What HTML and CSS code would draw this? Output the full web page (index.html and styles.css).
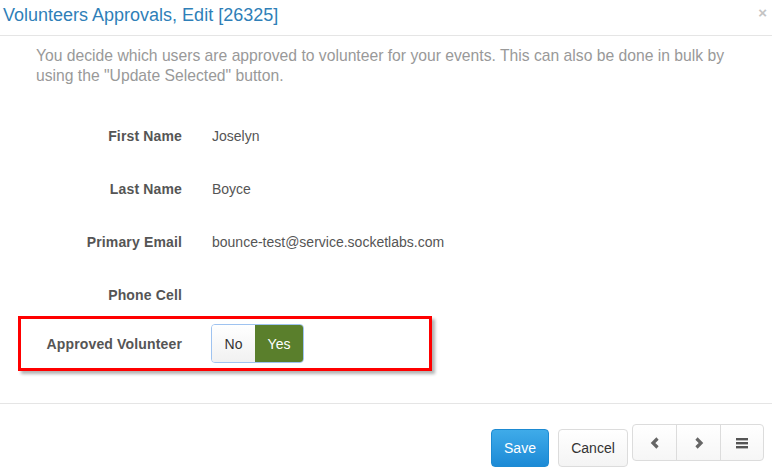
FILE: index.html
```html
<!DOCTYPE html>
<html>
<head>
<meta charset="utf-8">
<link rel="stylesheet" href="styles.css">
</head>
<body>
<div class="modal">
  <div class="modal-header">
    <h4 class="title">Volunteers Approvals, Edit [26325]</h4>
    <span class="close">×</span>
  </div>
  <div class="modal-body">
    <p class="desc">You decide which users are approved to volunteer for your events. This can also be done in bulk by using the "Update Selected" button.</p>
    <div class="form">
      <div class="row"><div class="label">First Name</div><div class="value">Joselyn</div></div>
      <div class="row"><div class="label">Last Name</div><div class="value">Boyce</div></div>
      <div class="row"><div class="label">Primary Email</div><div class="value">bounce-test@service.socketlabs.com</div></div>
      <div class="row row-last"><div class="label">Phone Cell</div><div class="value"></div></div>
      <div class="highlight">
        <div class="row row-toggle">
          <div class="label">Approved Volunteer</div>
          <div class="value">
            <div class="toggle"><span class="opt no">No</span><span class="opt yes">Yes</span></div>
          </div>
        </div>
      </div>
    </div>
  </div>
  <div class="modal-footer">
    <button class="btn btn-save">Save</button>
    <button class="btn btn-cancel">Cancel</button>
    <div class="btn-group">
      <span class="gbtn"><svg width="10" height="12" viewBox="0 0 10 12"><polyline points="7.5,1.5 3,6 7.5,10.5" fill="none" stroke="#666" stroke-width="3.2"/></svg></span>
      <span class="gbtn"><svg width="10" height="12" viewBox="0 0 10 12"><polyline points="2.5,1.5 7,6 2.5,10.5" fill="none" stroke="#666" stroke-width="3.2"/></svg></span>
      <span class="gbtn"><svg width="12" height="12" viewBox="0 0 12 12"><rect x="0" y="1" width="12" height="2.4" fill="#555"/><rect x="0" y="5" width="12" height="2.4" fill="#555"/><rect x="0" y="9" width="12" height="2.4" fill="#555"/></svg></span>
    </div>
  </div>
</div>
</body>
</html>
```

FILE: styles.css
```css
* { box-sizing: border-box; }
html, body { margin: 0; padding: 0; background: #fff; }
body { font-family: "Liberation Sans", Arial, sans-serif; font-size: 14px; color: #555; width: 772px; height: 476px; overflow: hidden; }

.modal-header {
  height: 36px;
  border-bottom: 1px solid #e5e5e5;
  display: flex;
  justify-content: space-between;
  align-items: flex-start;
}
.title {
  margin: 0;
  padding: 4px 0 0 3px;
  font-size: 18px;
  font-weight: normal;
  line-height: 22px;
  color: #2f7fb8;
}
.close {
  color: #c4c4c4;
  font-size: 15px;
  font-weight: bold;
  line-height: 16px;
  padding: 5px 5px 0 0;
}

.modal-body { padding: 10px 0 0 0; }
.desc {
  margin: 0 0 40px 36px;
  width: 720px;
  font-size: 15.7px;
  line-height: 20px;
  color: #999;
}
.form { display: flex; flex-direction: column; }
.row {
  display: grid;
  grid-template-columns: 182px 1fr;
  column-gap: 30px;
  line-height: 20px;
  height: 20px;
  margin-bottom: 33px;
  align-items: center;
}
.row-last { margin-bottom: 11px; }
.label { text-align: right; font-weight: bold; color: #555; letter-spacing: 0.15px; }
.value { color: #555; }

.highlight {
  margin: 0 0 0 18px;
  width: 414px;
  height: 55px;
  border: 3px solid #f00;
  box-shadow: 3px 3px 3px rgba(0,0,0,0.3);
  padding: 5px 0 0 0;
}
.row-toggle {
  grid-template-columns: 161px 1fr;
  column-gap: 29px;
  height: 39px;
  margin: 0;
}
.toggle {
  display: inline-flex;
  height: 39px;
  border: 1px solid #9fc3f0;
  border-radius: 4px;
  overflow: hidden;
}
.opt { display: flex; align-items: center; justify-content: center; font-size: 14px; }
.no { width: 43px; background: linear-gradient(#fff, #f1f1f1); color: #333; }
.yes { width: 48px; background: #5a7f2c; color: #fff; }

.modal-footer {
  margin-top: 32px;
  border-top: 1px solid #e5e5e5;
  height: 73px;
  display: flex;
  justify-content: flex-end;
  align-items: flex-start;
  padding: 20px 8px 0 0;
}
.btn {
  font-family: "Liberation Sans", Arial, sans-serif;
  font-size: 14px;
  height: 38px;
  border-radius: 4px;
  margin-top: 5px;
  padding: 0;
  cursor: pointer;
}
.btn-save {
  width: 58px;
  background: linear-gradient(#3fabe9, #1c8ad6);
  border: 1px solid #1d8ad2;
  color: #fff;
  margin-right: 9px;
}
.btn-cancel {
  width: 70px;
  background: linear-gradient(#fff, #f4f4f4);
  border: 1px solid #dcdcdc;
  color: #333;
  margin-right: 4px;
}
.btn-group {
  display: flex;
  height: 37px;
  border: 1px solid #dcdcdc;
  border-radius: 4px;
  background: linear-gradient(#fff, #f6f6f6);
}
.gbtn {
  width: 44px;
  display: flex;
  align-items: center;
  justify-content: center;
  border-left: 1px solid #dcdcdc;
}
.gbtn:first-child { border-left: none; width: 43px; }
.gbtn:last-child { width: 43px; }
```
